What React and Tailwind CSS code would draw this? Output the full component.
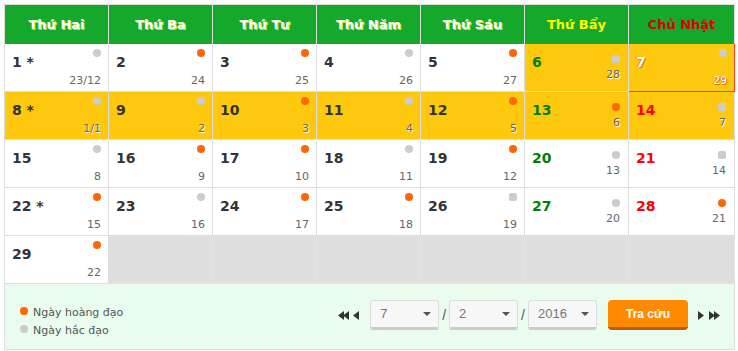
const days = ["Thứ Hai", "Thứ Ba", "Thứ Tư", "Thứ Năm", "Thứ Sáu", "Thứ Bẩy", "Chủ Nhật"]

// [solar, lunar, dot(o = orange, g = gray), yellow, square dot, today]
const weeks = [
  [["1 *", "23/12", "g"], ["2", "24", "o"], ["3", "25", "o"], ["4", "26", "g"], ["5", "27", "o"], ["6", "28", "g", 1, 1], ["7", "29", "g", 1, 0, 1]],
  [["8 *", "1/1", "g", 1], ["9", "2", "g", 1], ["10", "3", "o", 1], ["11", "4", "g", 1], ["12", "5", "o", 1], ["13", "6", "o", 1], ["14", "7", "g", 1, 1]],
  [["15", "8", "g"], ["16", "9", "o"], ["17", "10", "o"], ["18", "11", "g"], ["19", "12", "o"], ["20", "13", "g"], ["21", "14", "g", 0, 1]],
  [["22 *", "15", "o"], ["23", "16", "g"], ["24", "17", "o"], ["25", "18", "o"], ["26", "19", "g", 0, 1], ["27", "20", "g"], ["28", "21", "o"]],
  [["29", "22", "o"], null, null, null, null, null, null],
]

function Dot({ color, square }) {
  return (
    <span
      className={`block w-[8px] h-[8px] ${square ? "rounded-[2px]" : "rounded-full"} ${color === "o" ? "bg-[#ff6600]" : "bg-[#cccccc]"}`}
    />
  )
}

function Cell({ data, col }) {
  if (!data) return <div className="h-[48px] bg-[#dfdfdf] border-r border-b border-[#e4e4e4]" />
  const [solar, lunar, dot, yellow, square, today] = data
  const weekend = col >= 5 && !today
  let numColor = "text-[#333]"
  if (col === 5) numColor = "text-[#008000]"
  if (col === 6) numColor = "text-[#ff0000]"
  if (today) numColor = "text-white [text-shadow:1px_1px_0_#e0702a,-1px_0_0_#e0702a]"
  return (
    <div
      className={`h-[48px] flex justify-between pl-[7px] ${weekend ? "pr-[8px]" : "pr-[7px]"} border-b ${
        today ? "border-r border-[#ff3b1f]" : "border-r border-[#dddddd]"
      } ${yellow ? "bg-[#fec80f]" : "bg-white"}`}
    >
      <span className={`pt-[10px] text-[14px] leading-[17px] font-bold ${numColor}`}>{solar}</span>
      <div className="flex flex-col items-end">
        <div className={weekend ? "mt-[11px]" : "mt-[5px]"}>
          <Dot color={dot} square={square} />
        </div>
        <span
          className={`${weekend ? "mt-[5px]" : "mt-[17px]"} text-[11px] leading-[14px] ${
            today ? "text-white [text-shadow:1px_1px_0_#e0702a,-1px_0_0_#e0702a]" : "text-[#666] [text-shadow:1px_1px_0_#ffffff]"
          }`}
        >
          {lunar}
        </span>
      </div>
    </div>
  )
}

function Select({ value }) {
  return (
    <div className="w-[69px] h-[30px] flex items-center justify-between pl-[9px] pr-[7px] bg-[#f7f7f7] border border-[#dcdcdc] border-b-[3px] border-b-[#cccccc] rounded-[3px] text-[13px] text-[#777] font-['Liberation_Sans',Arial,sans-serif]">
      <span>{value}</span>
      <span className="w-0 h-0 border-l-[4px] border-r-[4px] border-t-[4px] border-l-transparent border-r-transparent border-t-[#555]" />
    </div>
  )
}

function Arrows({ dir }) {
  const left = (x) => `M${x + 6} 0 L${x} 4.5 L${x + 6} 9 Z`
  const right = (x) => `M${x} 0 L${x + 6} 4.5 L${x} 9 Z`
  const xs = dir === "left" ? [0, 5, 15] : [0, 11, 16]
  return (
    <svg width="22" height="9" viewBox="0 0 22 9">
      {xs.map((x) => (
        <path key={x} d={dir === "left" ? left(x) : right(x)} fill="#333" />
      ))}
    </svg>
  )
}

export default function App() {
  return (
    <div className="w-[738px] h-[351px] bg-white pl-[4px] pt-[4px] font-['DejaVu_Sans',Verdana,sans-serif]">
      <div className="w-[731px] border-l border-t border-[#dddddd]">
        <div className="grid grid-cols-[104px_104px_104px_104px_104px_104px_106px]">
          {days.map((d, i) => (
            <div
              key={d}
              className={`h-[39px] flex items-center justify-center bg-[#15a82a] border-r border-[#dddddd] text-[13px] font-bold ${
                i === 5
                  ? "text-[#ffff00]"
                  : i === 6
                  ? "text-[#dd0000]"
                  : "text-white [text-shadow:1px_1px_0_#c9e63a]"
              }`}
            >
              {d}
            </div>
          ))}
          {weeks.map((w, r) => w.map((c, i) => <Cell key={`${r}-${i}`} data={c} col={i} />))}
        </div>
        <div className="h-[66px] bg-[#e9fcee] border-r border-b border-[#dddddd] flex items-center pl-[15px] pr-[14px]">
          <div className="flex flex-col text-[11px] leading-[18px] text-[#555] mt-[10px]">
            <div className="flex items-center gap-[5px]">
              <span className="w-[8px] h-[8px] rounded-full bg-[#ff6600] -mt-[4px]" />
              <span>Ngày hoàng đạo</span>
            </div>
            <div className="flex items-center gap-[5px]">
              <span className="w-[8px] h-[8px] rounded-full bg-[#cccccc] -mt-[4px]" />
              <span>Ngày hắc đạo</span>
            </div>
          </div>
          <div className="ml-auto flex items-center mb-[3px]">
            <Arrows dir="left" />
            <div className="ml-[10px] flex items-center">
              <Select value="7" />
              <span className="mx-[3px] text-[14px] text-[#555] font-['Liberation_Sans',Arial,sans-serif]">/</span>
              <Select value="2" />
              <span className="mx-[3px] text-[14px] text-[#555] font-['Liberation_Sans',Arial,sans-serif]">/</span>
              <Select value="2016" />
            </div>
            <button className="ml-[11px] w-[80px] h-[30px] rounded-[4px] bg-[#ff8a00] border-b-[3px] border-[#b85f00] text-white text-[12px] font-bold font-['Liberation_Sans',Arial,sans-serif]">
              Tra cứu
            </button>
            <div className="ml-[10px]">
              <Arrows dir="right" />
            </div>
          </div>
        </div>
      </div>
    </div>
  )
}
